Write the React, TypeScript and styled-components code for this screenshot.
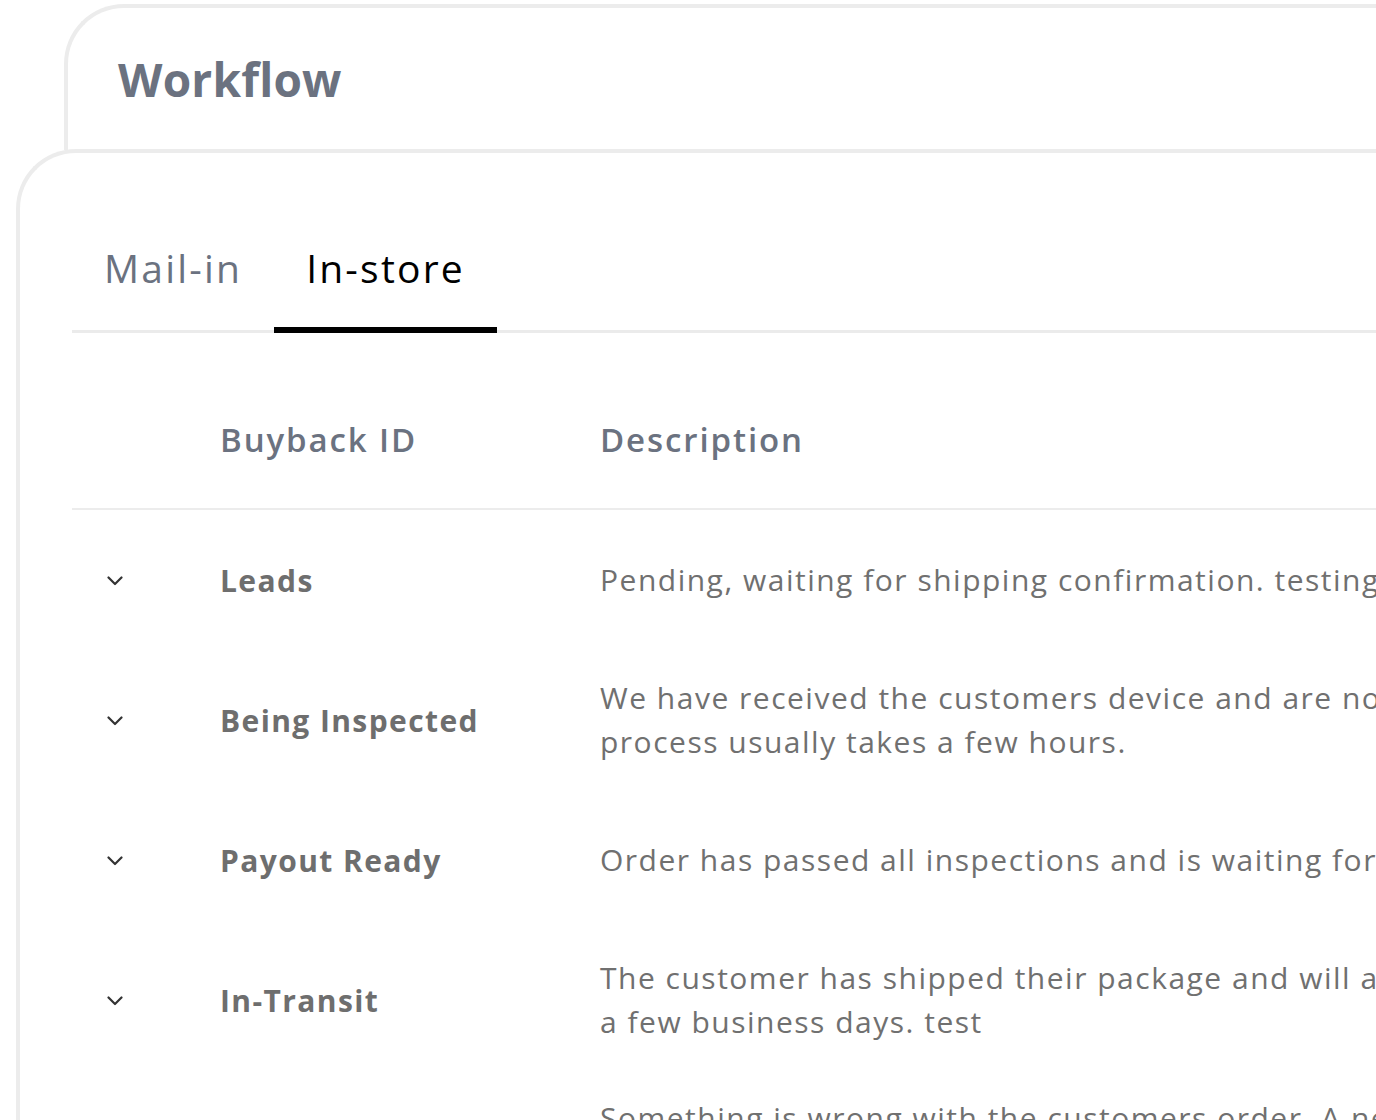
import React, { useState } from "react";
import styled, { createGlobalStyle } from "styled-components";

const GlobalStyle = createGlobalStyle`
  html, body {
    margin: 0;
    padding: 0;
    background: #ffffff;
    overflow: hidden;
  }
  body {
    font-family: "Open Sans", "Liberation Sans", Arial, sans-serif;
    -webkit-font-smoothing: antialiased;
  }
  * { box-sizing: border-box; }
`;

const Shell = styled.div`
  width: 1900px;
  padding: 4px 0 0 16px;
`;

const HeaderCard = styled.header`
  margin-left: 48px;
  height: 146px;
  border: 4px solid #ececec;
  border-right: none;
  border-bottom: none;
  border-top-left-radius: 60px;
  display: flex;
  align-items: center;
  padding: 0 0 0 50px;
  background: #ffffff;
`;

const Title = styled.h1`
  margin: 0;
  font-size: 46px;
  font-weight: 700;
  color: #6b7280;
  letter-spacing: 0.2px;
`;

const BodyCard = styled.section`
  margin-top: -1px;
  border: 4px solid #ececec;
  border-right: none;
  border-bottom: none;
  border-top-left-radius: 60px;
  background: #ffffff;
  padding: 89px 0 0 52px;
  min-height: 1200px;
`;

const TabList = styled.div`
  display: flex;
  border-bottom: 3px solid #ebebeb;
`;

const Tab = styled.button<{ $active?: boolean }>`
  appearance: none;
  background: none;
  border: none;
  border-bottom: 6px solid ${(p) => (p.$active ? "#000000" : "transparent")};
  margin-bottom: -3px;
  padding: 0 32px 33px 32px;
  font-family: inherit;
  font-size: 39px;
  line-height: 52px;
  font-weight: 400;
  letter-spacing: 2.2px;
  color: ${(p) => (p.$active ? "#000000" : "#6b7280")};
  cursor: pointer;
`;

const Table = styled.div`
  margin-top: 37px;
`;

const Row = styled.div<{ $head?: boolean }>`
  display: grid;
  grid-template-columns: 148px 380px 1200px;
  align-items: center;
  height: 140px;
  border-bottom: ${(p) => (p.$head ? "2px solid #ececec" : "none")};
`;

const ChevronCell = styled.div`
  padding-left: 35px;
  display: flex;
  align-items: center;
  padding-top: 2px;
`;

const HeadCell = styled.div`
  font-size: 33px;
  font-weight: 600;
  color: #6b7280;
  letter-spacing: 1.9px;
`;

const Label = styled.div`
  font-size: 30px;
  font-weight: 700;
  color: #6e6e6e;
  letter-spacing: 1.4px;
`;

const Desc = styled.div`
  font-size: 30px;
  line-height: 44px;
  font-weight: 400;
  color: #707070;
  white-space: pre;
  letter-spacing: 1.5px;
`;

const Chevron = () => (
  <svg width="16" height="10" viewBox="0 0 16 10" fill="none">
    <path
      d="M1.5 1.5 L8 8 L14.5 1.5"
      stroke="#333333"
      strokeWidth="2.2"
      strokeLinecap="round"
      strokeLinejoin="round"
    />
  </svg>
);

const statuses = [
  {
    id: "Leads",
    text: "Pending, waiting for shipping confirmation. testing status updates",
  },
  {
    id: "Being Inspected",
    text:
      "We have received the customers device and are now inspecting it. This\nprocess usually takes a few hours.",
  },
  {
    id: "Payout Ready",
    text: "Order has passed all inspections and is waiting for payout to be sent.",
  },
  {
    id: "In-Transit",
    text:
      "The customer has shipped their package and will arrive within\na few business days. test",
  },
  {
    id: "Issue",
    text:
      "Something is wrong with the customers order. A new offer has been\nsent to the customer for review.",
  },
];

export default function App() {
  const [tab, setTab] = useState("in-store");
  return (
    <>
      <GlobalStyle />
      <Shell>
        <HeaderCard>
          <Title>Workflow</Title>
        </HeaderCard>
        <BodyCard>
          <TabList>
            <Tab $active={tab === "mail-in"} onClick={() => setTab("mail-in")}>
              Mail-in
            </Tab>
            <Tab $active={tab === "in-store"} onClick={() => setTab("in-store")}>
              In-store
            </Tab>
          </TabList>
          <Table>
            <Row $head>
              <div />
              <HeadCell>Buyback ID</HeadCell>
              <HeadCell>Description</HeadCell>
            </Row>
            {statuses.map((s) => (
              <Row key={s.id}>
                <ChevronCell>
                  <Chevron />
                </ChevronCell>
                <Label>{s.id}</Label>
                <Desc>{s.text}</Desc>
              </Row>
            ))}
          </Table>
        </BodyCard>
      </Shell>
    </>
  );
}
